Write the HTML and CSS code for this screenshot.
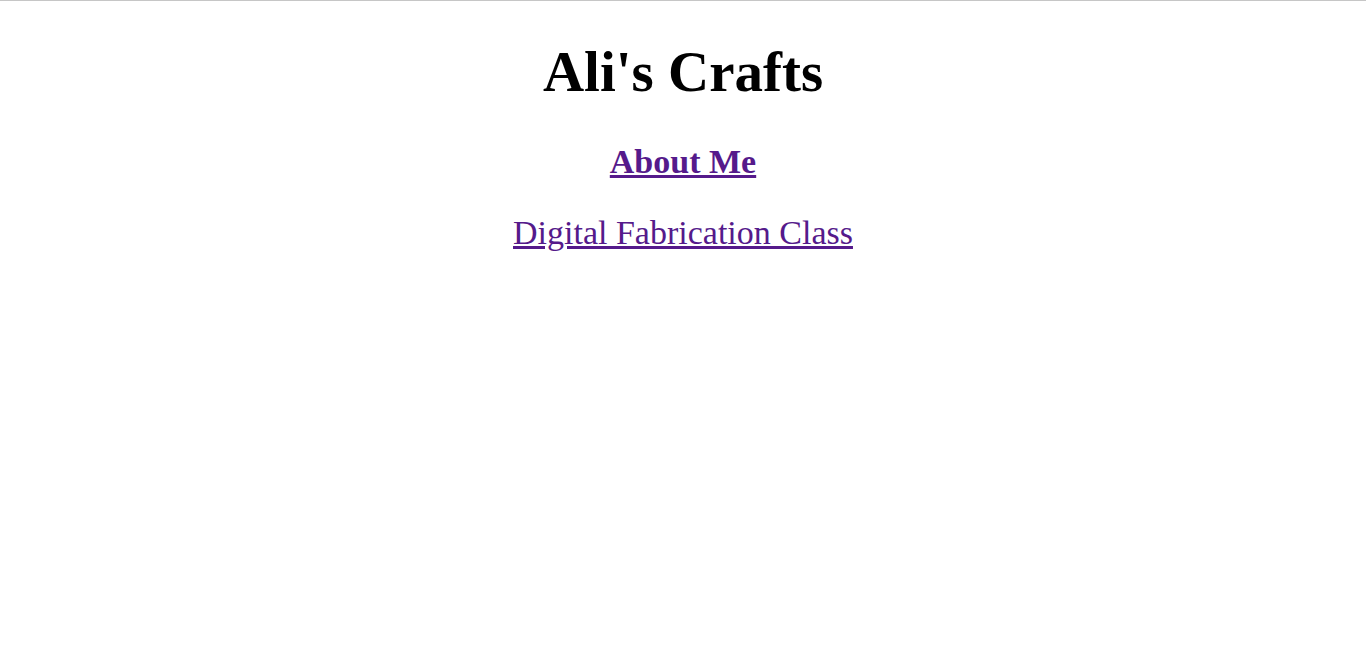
FILE: index.html
```html
<!DOCTYPE html>
<html lang="en">
<head>
<meta charset="utf-8">
<title>Ali's Crafts</title>
<link rel="stylesheet" href="styles.css">
</head>
<body>
<div class="page">
  <h1 class="title">Ali's Crafts</h1>
  <h2 class="section"><a class="link" href="#about">About Me</a></h2>
  <p class="item"><a class="link" href="#class">Digital Fabrication Class</a></p>
</div>
</body>
</html>
```
FILE: styles.css
```css
html, body {
  margin: 0;
  padding: 0;
  background: #ffffff;
}
body {
  border-top: 1px solid #c6c6c6;
  font-family: "Liberation Serif", "Times New Roman", serif;
  color: #000000;
}
.page {
  display: flex;
  flex-direction: column;
  align-items: center;
  padding-top: 39px;
}
.title {
  margin: 0;
  font-size: 57px;
  font-weight: bold;
  line-height: 64px;
}
.section {
  margin: 38px 0 0 0;
  font-size: 34px;
  font-weight: bold;
  line-height: 39px;
}
.item {
  margin: 32px 0 0 0;
  font-size: 34px;
  line-height: 39px;
}
.link {
  color: #551a8b;
  text-decoration: underline;
}
```
